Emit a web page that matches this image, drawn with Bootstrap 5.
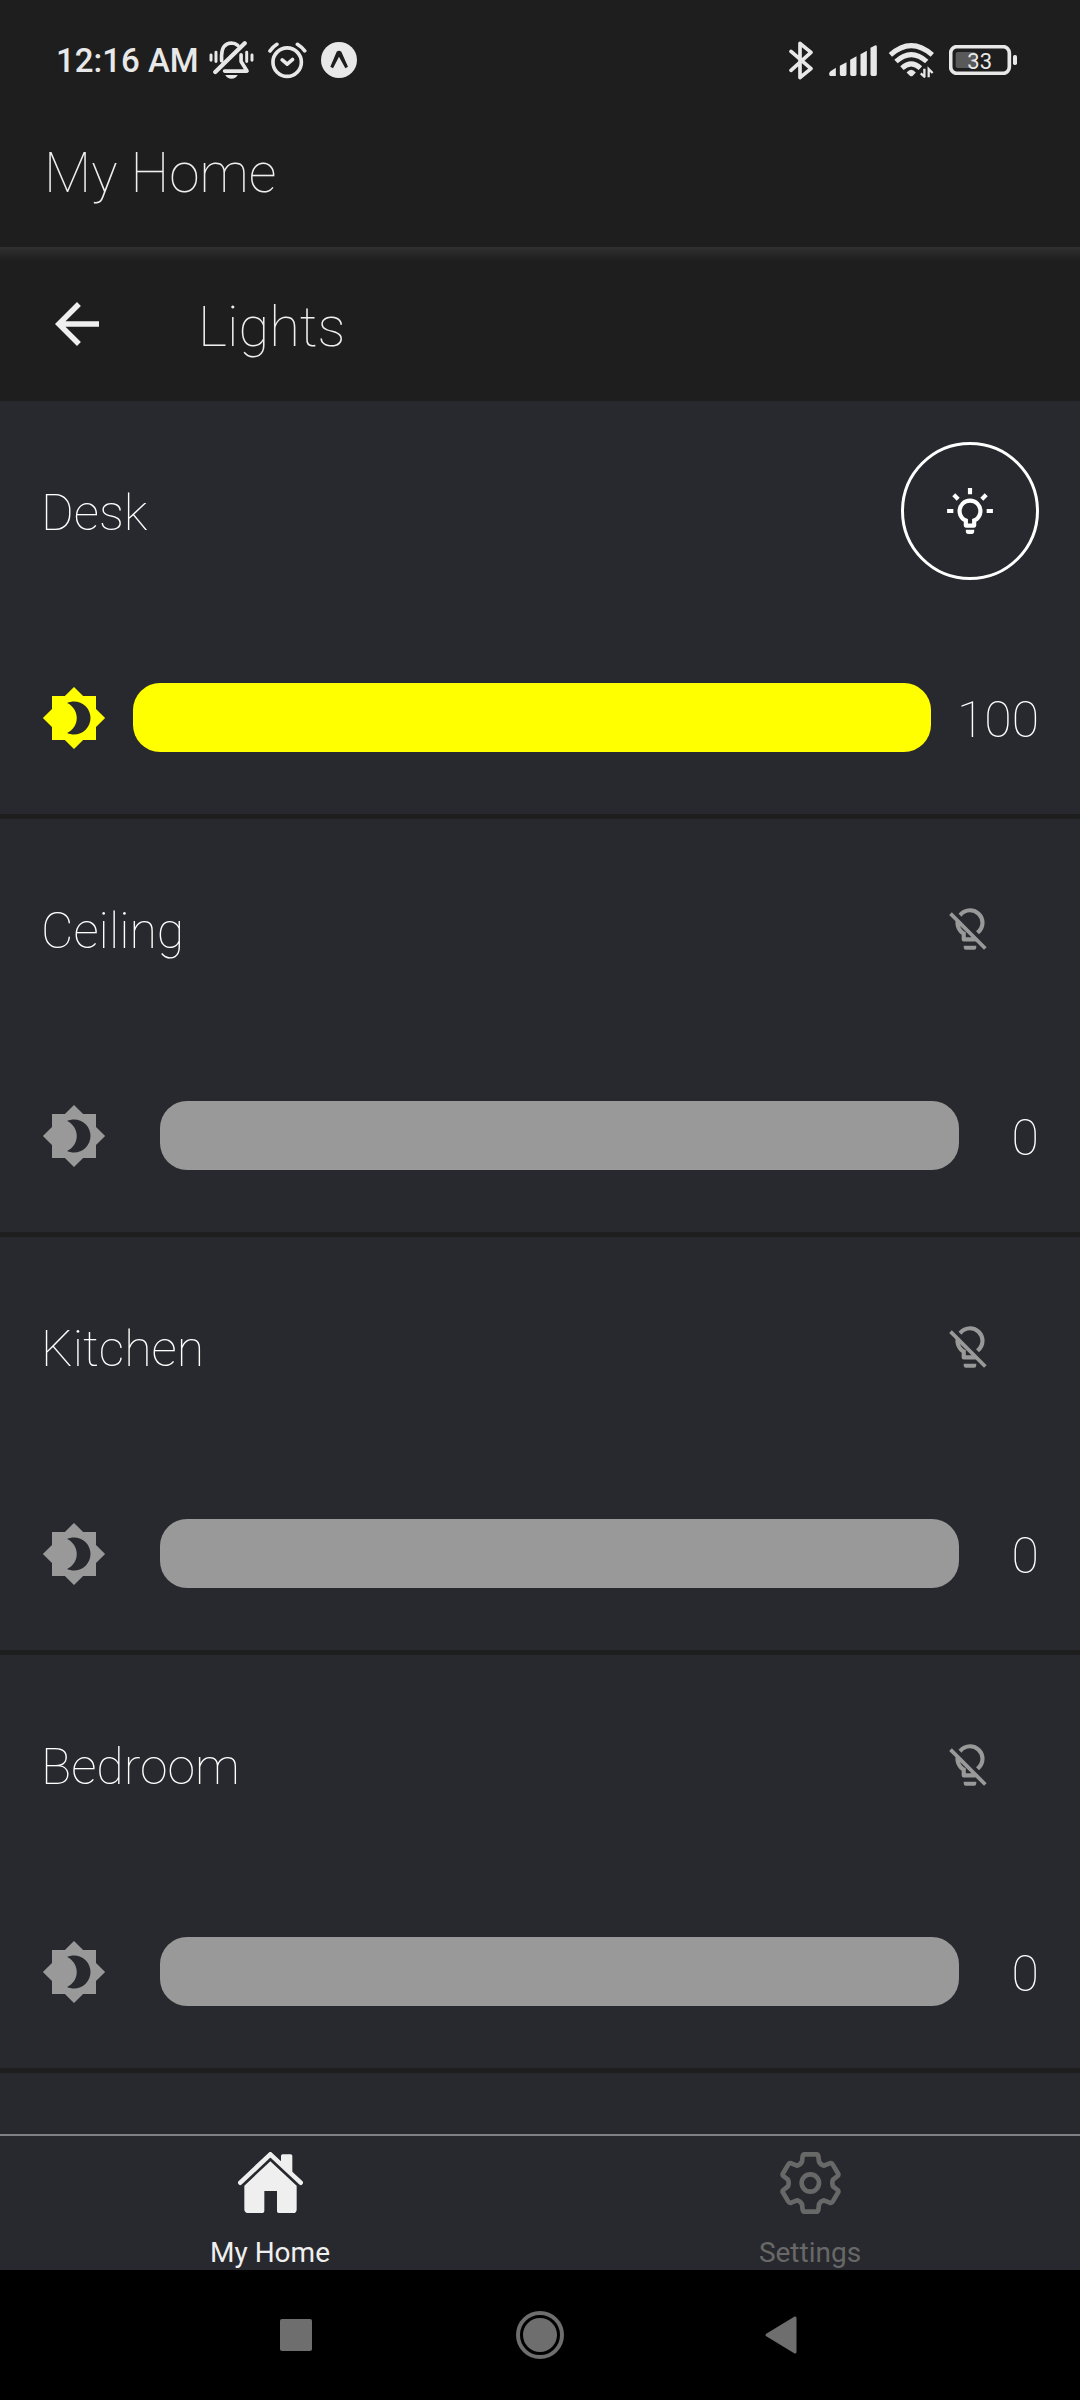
<!DOCTYPE html>
<html lang="en">
<head>
<meta charset="utf-8">
<meta name="viewport" content="width=device-width, initial-scale=1">
<title>My Home – Lights</title>
<link href="https://cdn.jsdelivr.net/npm/bootstrap@5.3.0/dist/css/bootstrap.min.css" rel="stylesheet">
<style>
  body { font-family: Roboto, "Liberation Sans", sans-serif; background: #28292e; color: #fff; }
  svg { display: block; flex: none; }
  .bar-dark { background: #1e1e1e; color: #efefef; }
  .status-bar { height: 120px; padding: 0 63px 0 56px; color: #e8e8e8; }
  .status-left { gap: 14px; }
  .status-time { font-size: 33px; font-weight: 500; line-height: 40px; padding-top: 2px; margin-right: -4px; }
  .app-title { height: 127px; padding: 21px 44px 0; }
  .title-text { font-size: 55px; font-weight: 100; line-height: 64px; }
  .screen-title { font-size: 56px; padding-top: 6px; }
  .screen-bar { height: 154px; padding: 0 44px; gap: 88px; background: linear-gradient(#303030, #1e1e1e 14px); }
  .icon-btn { color: inherit; background: none; border: 0; padding: 0; }
  .light-row { padding: 41px 41px 62px; border-bottom: 5px solid #1e1e1e; gap: 103px; }
  .light-text { font-size: 50px; font-weight: 100; line-height: 60px; padding-top: 4px; }
  .toggle { width: 138px; height: 138px; border: 3px solid transparent; border-radius: 50%; color: #999; }
  .toggle.is-on { border-color: #fff; color: #fff; }
  .dimmer { color: #999; }
  .dimmer.is-on { color: #ff0; }
  .level { appearance: none; -webkit-appearance: none; width: 80%; height: 69px; margin: 0; border-radius: 27px; background: currentColor; color: inherit; }
  .level::-webkit-slider-thumb { -webkit-appearance: none; width: 69px; height: 69px; background: transparent; border: 0; }
  .level::-moz-range-thumb { width: 69px; height: 69px; background: transparent; border: 0; }
  .tab-bar { height: 136px; border-top: 2px solid #808185; background: #28292e; }
  .tab-item { color: #686868; font-size: 28px; line-height: 32px; padding-top: 16px; gap: 23px; }
  .tab-item.active { color: #efefef; }
  .system-bar { height: 130px; background: #000; color: #6e6e6e; padding: 0 270px; }
</style>
<script src="https://cdn.jsdelivr.net/npm/bootstrap@5.3.0/dist/js/bootstrap.bundle.min.js"></script>
</head>
<body>
<svg class="d-none" aria-hidden="true">
  <symbol id="i-dim" viewBox="0 0 24 24"><path fill="currentColor" d="M12,18C11.11,18 10.26,17.8 9.5,17.45C11.56,16.5 13,14.42 13,12C13,9.58 11.56,7.5 9.5,6.55C10.26,6.2 11.11,6 12,6A6,6 0 0,1 18,12A6,6 0 0,1 12,18M20,8.69V4H15.31L12,0.69L8.69,4H4V8.69L0.69,12L4,15.31V20H8.69L12,23.31L15.31,20H20V15.31L23.31,12L20,8.69Z"/></symbol>
  <symbol id="i-on" viewBox="0 0 24 24"><path fill="currentColor" d="M20,11H23V13H20V11M1,11H4V13H1V11M13,1V4H11V1H13M4.92,3.5L7.05,5.64L5.63,7.05L3.5,4.93L4.92,3.5M16.95,5.63L19.07,3.5L20.5,4.93L18.37,7.05L16.95,5.63M12,6A6,6 0 0,1 18,12C18,14.22 16.79,16.16 15,17.2V19A1,1 0 0,1 14,20H10A1,1 0 0,1 9,19V17.2C7.21,16.16 6,14.22 6,12A6,6 0 0,1 12,6M14,21V22A1,1 0 0,1 13,23H11A1,1 0 0,1 10,22V21H14M11,18H13V15.87C14.73,15.43 16,13.86 16,12A4,4 0 0,0 12,8A4,4 0 0,0 8,12C8,13.86 9.27,15.43 11,15.87V18Z"/></symbol>
  <symbol id="i-off" viewBox="0 0 24 24"><path fill="currentColor" d="M12,2C9.76,2 7.78,3.05 6.5,4.68L7.93,6.11C8.84,4.84 10.32,4 12,4A5,5 0 0,1 17,9C17,10.68 16.16,12.16 14.89,13.06L16.31,14.5C17.94,13.21 19,11.24 19,9A7,7 0 0,0 12,2M3.28,4L2,5.27L5.04,8.3C5,8.53 5,8.76 5,9C5,11.38 6.19,13.47 8,14.74V17A1,1 0 0,0 9,18H14.73L18.73,22L20,20.72L3.28,4M7.23,10.5L12.73,16H10V13.58C8.68,13 7.66,11.88 7.23,10.5M9,20V21A1,1 0 0,0 10,22H14A1,1 0 0,0 15,21V20H9Z"/></symbol>
</svg>

<div class="vh-100 d-flex flex-column overflow-hidden">
  <header class="bar-dark flex-shrink-0">
    <div class="status-bar d-flex align-items-center justify-content-between">
      <div class="status-left d-flex align-items-center">
        <span class="status-time">12:16 AM</span>
        <!-- vibrate, alarm, running app -->
        <svg width="45" height="38" viewBox="0 0 134 115" fill="none" stroke="currentColor" stroke-width="11" stroke-linecap="round" stroke-linejoin="round">
          <path d="M37 60V44Q38 7 67 6Q78 6 86 13M96 42V62L114 91H46"/>
          <path d="M107 7L18 94" stroke-width="13"/>
          <path d="M5 42V58M20 34V62M113 34V62M129 42V58" stroke-width="9"/>
          <path d="M48 103H86Q80 114 67 114T48 103Z" fill="currentColor" stroke="none"/>
        </svg>
        <svg width="39" height="37" viewBox="0 0 118 110" fill="none" stroke="currentColor" stroke-width="11" stroke-linecap="round" stroke-linejoin="round">
          <circle cx="58" cy="60" r="43"/><path d="M43 53L58 66L74 52M6 26Q14 14 27 6M89 6Q102 14 111 26"/>
        </svg>
        <svg width="36" height="36" viewBox="0 0 108 108"><circle cx="54" cy="54" r="54" fill="currentColor"/><path d="M28 74L47 29Q54 24 61 29L81 74L73 79L54 44L36 79Z" fill="#1e1e1e"/></svg>
      </div>
      <div class="d-flex align-items-center">
        <!-- bluetooth, signal, wifi, battery -->
        <svg width="24" height="39" viewBox="0 0 72 115" fill="none" stroke="currentColor" stroke-width="11" stroke-linecap="round" stroke-linejoin="round"><path d="M6 30L66 82L33 109V6L66 33L6 87"/></svg>
        <svg class="ms-3" width="48" height="31" viewBox="0 0 143 93" fill="currentColor"><path d="M4 79L20 68V93H4Q0 93 0 88V84ZM32 62L52 52V88Q52 93 47 93H37Q32 93 32 88ZM63 44L82 34V88Q82 93 77 93H68Q63 93 63 88ZM94 28L113 17V88Q113 93 108 93H99Q94 93 94 88ZM124 8L139 1Q143 1 143 5V88Q143 93 138 93H129Q124 93 124 88Z"/></svg>
        <svg class="ms-2" width="56" height="35" viewBox="-10 0 167 106" fill="none" stroke="currentColor" stroke-width="15"><path d="M5 36Q68 -20 132 36M22 56Q68 14 115 56M40 76Q68 50 96 76"/><path d="M54 89Q68 73 82 89L73 99Q68 103 64 99Z" fill="currentColor" stroke="none"/><path d="M108 78V104M97 92L110 104M121 104V79L133 91" stroke-width="7"/></svg>
        <svg class="ms-2" width="68" height="30" viewBox="0 0 204 90"><rect x="20" y="21" width="60" height="48" rx="6" fill="#595959"/><rect x="5" y="5" width="176" height="80" rx="19" fill="none" stroke="currentColor" stroke-width="11"/><rect x="192" y="30" width="12" height="30" rx="5" fill="currentColor"/><text x="92" y="71" text-anchor="middle" font-size="66" font-weight="400" fill="currentColor">33</text></svg>
      </div>
    </div>
    <div class="app-title"><h1 class="title-text m-0">My Home</h1></div>
  </header>

  <div class="screen-bar bar-dark d-flex align-items-center flex-shrink-0">
    <button class="icon-btn" type="button" aria-label="Back"><svg width="66" height="66" viewBox="0 0 24 24"><path fill="currentColor" d="M20,11V13H7.83L13.42,18.59L12,20L4,12L12,4L13.42,5.41L7.83,11H20Z"/></svg></button>
    <h2 class="title-text screen-title m-0">Lights</h2>
  </div>

  <main class="flex-grow-1 overflow-hidden">
    <section class="light-row d-flex flex-column">
      <div class="d-flex align-items-center justify-content-between">
        <label class="light-text" for="desk">Desk</label>
        <button class="icon-btn toggle is-on d-flex align-items-center justify-content-center" type="button" aria-label="Turn Desk off"><svg width="50" height="50"><use href="#i-on"/></svg></button>
      </div>
      <div class="dimmer is-on d-flex align-items-center justify-content-between">
        <svg width="66" height="66"><use href="#i-dim"/></svg>
        <input class="level" id="desk" type="range" min="0" max="100" value="100">
        <output class="light-text text-white" for="desk">100</output>
      </div>
    </section>
    <section class="light-row d-flex flex-column">
      <div class="d-flex align-items-center justify-content-between">
        <label class="light-text" for="ceiling">Ceiling</label>
        <button class="icon-btn toggle d-flex align-items-center justify-content-center" type="button" aria-label="Turn Ceiling on"><svg width="50" height="50"><use href="#i-off"/></svg></button>
      </div>
      <div class="dimmer d-flex align-items-center justify-content-between">
        <svg width="66" height="66"><use href="#i-dim"/></svg>
        <input class="level" id="ceiling" type="range" min="0" max="100" value="0">
        <output class="light-text text-white" for="ceiling">0</output>
      </div>
    </section>
    <section class="light-row d-flex flex-column">
      <div class="d-flex align-items-center justify-content-between">
        <label class="light-text" for="kitchen">Kitchen</label>
        <button class="icon-btn toggle d-flex align-items-center justify-content-center" type="button" aria-label="Turn Kitchen on"><svg width="50" height="50"><use href="#i-off"/></svg></button>
      </div>
      <div class="dimmer d-flex align-items-center justify-content-between">
        <svg width="66" height="66"><use href="#i-dim"/></svg>
        <input class="level" id="kitchen" type="range" min="0" max="100" value="0">
        <output class="light-text text-white" for="kitchen">0</output>
      </div>
    </section>
    <section class="light-row d-flex flex-column">
      <div class="d-flex align-items-center justify-content-between">
        <label class="light-text" for="bedroom">Bedroom</label>
        <button class="icon-btn toggle d-flex align-items-center justify-content-center" type="button" aria-label="Turn Bedroom on"><svg width="50" height="50"><use href="#i-off"/></svg></button>
      </div>
      <div class="dimmer d-flex align-items-center justify-content-between">
        <svg width="66" height="66"><use href="#i-dim"/></svg>
        <input class="level" id="bedroom" type="range" min="0" max="100" value="0">
        <output class="light-text text-white" for="bedroom">0</output>
      </div>
    </section>
  </main>

  <nav class="tab-bar d-flex flex-shrink-0">
    <a class="tab-item active flex-fill w-50 d-flex flex-column align-items-center text-decoration-none" href="#" aria-current="page">
      <svg width="65" height="62" viewBox="0 0 195 186" fill="currentColor"><path d="M7 92L97 7L188 92" fill="none" stroke="currentColor" stroke-width="14" stroke-linecap="round" stroke-linejoin="round"/><path d="M129 36V12Q129 7 134 7H158Q163 7 163 12V68ZM19 101L97 28L176 101V173Q175 183 166 183H122Q117 183 117 178V117H79V178Q78 183 74 183H29Q20 182 19 173Z"/></svg>
      <span>My Home</span>
    </a>
    <a class="tab-item flex-fill w-50 d-flex flex-column align-items-center text-decoration-none" href="#">
      <svg width="61" height="62" viewBox="0 0 183 186" fill="none" stroke="currentColor" stroke-width="14" stroke-linejoin="round"><path d="M72 7H111Q114 8 115 12L117 29Q122 39 132 41L149 34Q155 32 158 37L175 66Q176 70 173 72L159 83Q155 93 159 103L173 114Q176 117 175 120L158 149Q155 154 149 152L132 145Q122 147 117 157L115 174Q114 178 111 179H72Q69 178 68 174L66 157Q61 147 51 145L34 152Q28 154 25 149L8 120Q7 117 10 114L24 103Q28 93 24 83L10 72Q7 70 8 66L25 37Q28 32 34 34L51 41Q61 39 66 29L68 12Q69 8 72 7Z"/><circle cx="91" cy="93" r="26"/></svg>
      <span>Settings</span>
    </a>
  </nav>

  <div class="system-bar d-flex align-items-center justify-content-between flex-shrink-0">
    <button class="icon-btn" type="button" aria-label="Recent apps"><svg width="52" height="50" viewBox="0 0 52 50"><rect x="10" y="9" width="32" height="32" rx="2" fill="currentColor"/></svg></button>
    <button class="icon-btn" type="button" aria-label="Home"><svg width="50" height="50" viewBox="0 0 50 50"><circle cx="25" cy="25" r="22" fill="none" stroke="currentColor" stroke-width="4"/><circle cx="25" cy="25" r="17" fill="currentColor"/></svg></button>
    <button class="icon-btn" type="button" aria-label="Back to previous"><svg width="52" height="50" viewBox="0 0 52 50"><path d="M9 25L37 8V42Z" fill="currentColor" stroke="currentColor" stroke-width="3" stroke-linejoin="round"/></svg></button>
  </div>
</div>
</body>
</html>
